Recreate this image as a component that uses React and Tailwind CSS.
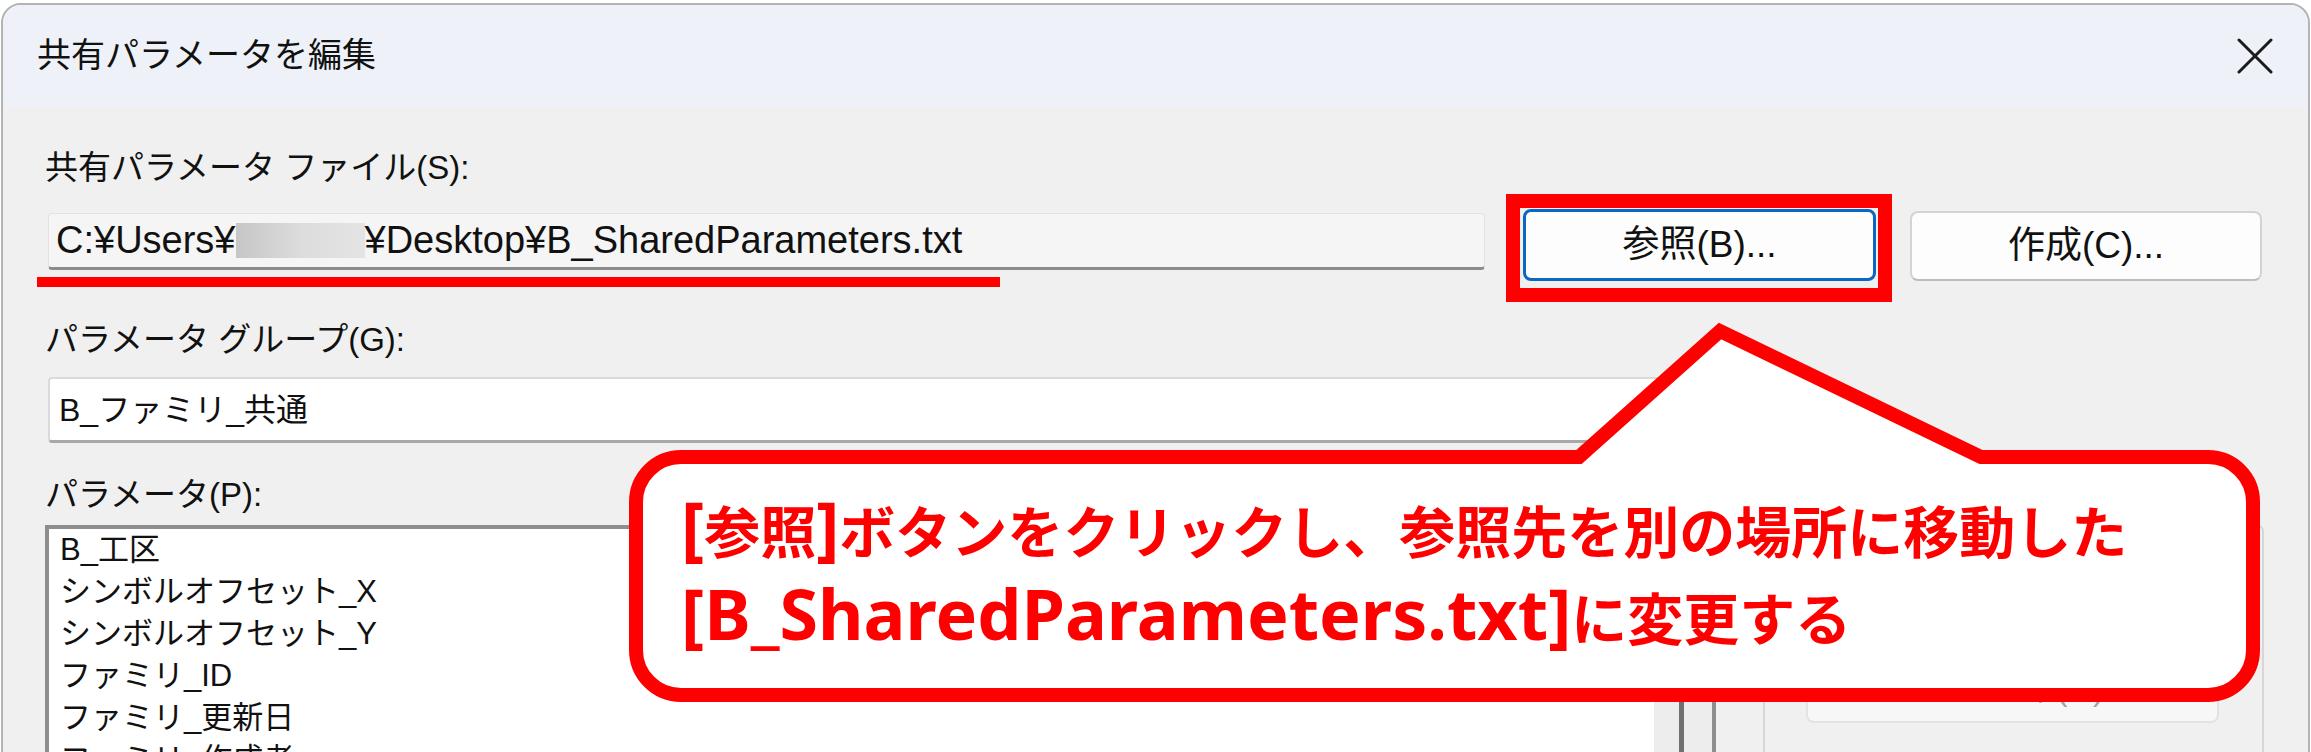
import React from "react"

const params = [
  "B_工区",
  "シンボルオフセット_X",
  "シンボルオフセット_Y",
  "ファミリ_ID",
  "ファミリ_更新日",
  "ファミリ_作成者",
]

function CloseIcon() {
  return (
    <svg width="36" height="36" viewBox="0 0 36 36" className="block">
      <path d="M2 2 L34 34 M34 2 L2 34" stroke="#1b1b1b" strokeWidth="3" strokeLinecap="round" />
    </svg>
  )
}

// Red speech bubble pointing up to the browse button
function Callout() {
  return (
    <>
      <svg
        width="2311"
        height="752"
        viewBox="0 0 2311 752"
        className="absolute left-0 top-0 pointer-events-none"
      >
        <path
          d="M681 457 L1579 457 L1720 331 L1981 457 L2208 457
             A45 45 0 0 1 2253 502 L2253 650 A45 45 0 0 1 2208 695
             L681 695 A45 45 0 0 1 636 650 L636 502 A45 45 0 0 1 681 457 Z"
          fill="#ffffff"
          stroke="#ff0000"
          strokeWidth="14"
          strokeLinejoin="miter"
        />
      </svg>
      <div className="absolute left-[681px] top-[484px] text-[#ff0000] font-bold font-['Noto_Sans_CJK_JP',sans-serif] text-[56px] leading-[85px] whitespace-nowrap">
        <div>
          <span className="font-['Noto_Sans',sans-serif] text-[70px]">[</span>参照<span className="font-['Noto_Sans',sans-serif] text-[70px]">]</span>ボタンをクリックし、参照先を別の場所に移動した
        </div>
        <div>
          <span className="font-['Noto_Sans',sans-serif] text-[70px]">[B_SharedParameters.txt]</span>に変更する
        </div>
      </div>
    </>
  )
}

export default function App() {
  return (
    <div className="relative w-[2311px] h-[752px] overflow-hidden bg-white font-['Liberation_Sans','Noto_Sans_CJK_JP',sans-serif] text-[#111]">
      {/* Dialog window */}
      <div className="ml-[1px] mt-[3px] w-[2309px] h-[800px] rounded-t-[20px] border-2 border-[#b3b3b3] bg-[#f0f0f0] overflow-hidden">
        {/* Title bar */}
        <div className="h-[102px] bg-[#eef2f8] flex items-center justify-between pl-[34px] pr-[35px]">
          <span className="text-[34px] mb-[2px]">共有パラメータを編集</span>
          <CloseIcon />
        </div>

        {/* Body */}
        <div className="pl-[42px] pt-[41px]">
          <div className="h-[40px] flex items-center text-[33px]">共有パラメータ ファイル(S):</div>

          <div className="mt-[21px] flex items-start">
            <div className="relative mt-[4px] ml-[3px] w-[1437px] h-[57px] rounded-[4px] border border-[#e2e2e2] border-b-[3px] border-b-[#8c8c8c] bg-[#f5f5f5] flex items-center pl-[7px] text-[38px]">
              <span>C:¥Users¥</span>
              <span className="inline-block w-[129px] h-[35px] bg-linear-to-r from-[#c6c6c6] via-[#dcdcdc] to-[#e4e4e4]" />
              <span>¥Desktop¥B_SharedParameters.txt</span>
              {/* red underline */}
              <div className="absolute left-[-12px] top-[63px] w-[963px] h-[10px] bg-[#ff0000]" />
            </div>

            <div className="relative ml-[38px]">
              <button className="w-[353px] h-[72px] rounded-[8px] border-[3px] border-[#0a67c2] bg-[#fdfdfd] text-[37px] flex items-center justify-center">
                参照(B)...
              </button>
              <div className="absolute left-[-17px] top-[-15px] w-[386px] h-[108px] border-[14px] border-[#ff0000]" />
            </div>

            <button className="ml-[34px] mt-[2px] w-[352px] h-[70px] rounded-[8px] border-2 border-[#d3d3d3] border-b-[#bdbdbd] bg-[#fdfdfd] text-[37px] flex items-center justify-center">
              作成(C)...
            </button>
          </div>

          <div className="mt-[39px] h-[40px] flex items-center text-[33px]">パラメータ グループ(G):</div>

          <div className="mt-[17px] ml-[3px] w-[1668px] h-[66px] rounded-[4px] border-2 border-[#dadada] border-b-[3px] border-b-[#a8a8a8] bg-white flex items-center pl-[9px] text-[32px]">
            B_ファミリ_共通
          </div>

          <div className="mt-[32px] h-[40px] flex items-center text-[33px]">パラメータ(P):</div>

          <div className="mt-[10px] flex items-start">
            {/* Parameter list */}
            <div className="w-[1671px] h-[240px] border-t-4 border-l-4 border-r-4 border-[#8e8e8e] bg-white flex">
              <div className="flex-1 pl-[11px] text-[31px] leading-[42px]">
                {params.map(p => (
                  <div key={p}>{p}</div>
                ))}
              </div>
              <div className="w-[58px] bg-[#ededed] flex">
                <div className="w-[25px]" />
                <div className="w-[5px] bg-[#707070]" />
              </div>
            </div>

            {/* Right group box */}
            <div className="ml-[47px] w-[501px] h-[260px] rounded-[6px] border-2 border-[#d6d6d6] pl-[41px] pt-[128px]">
              <button className="w-[413px] h-[68px] rounded-[8px] border-2 border-[#e3e3e3] bg-[#f7f7f7] text-[33px] text-[#a3a3a3] flex items-center justify-center">
                プロパティ(O)...
              </button>
            </div>
          </div>
        </div>
      </div>

      <Callout />
    </div>
  )
}
